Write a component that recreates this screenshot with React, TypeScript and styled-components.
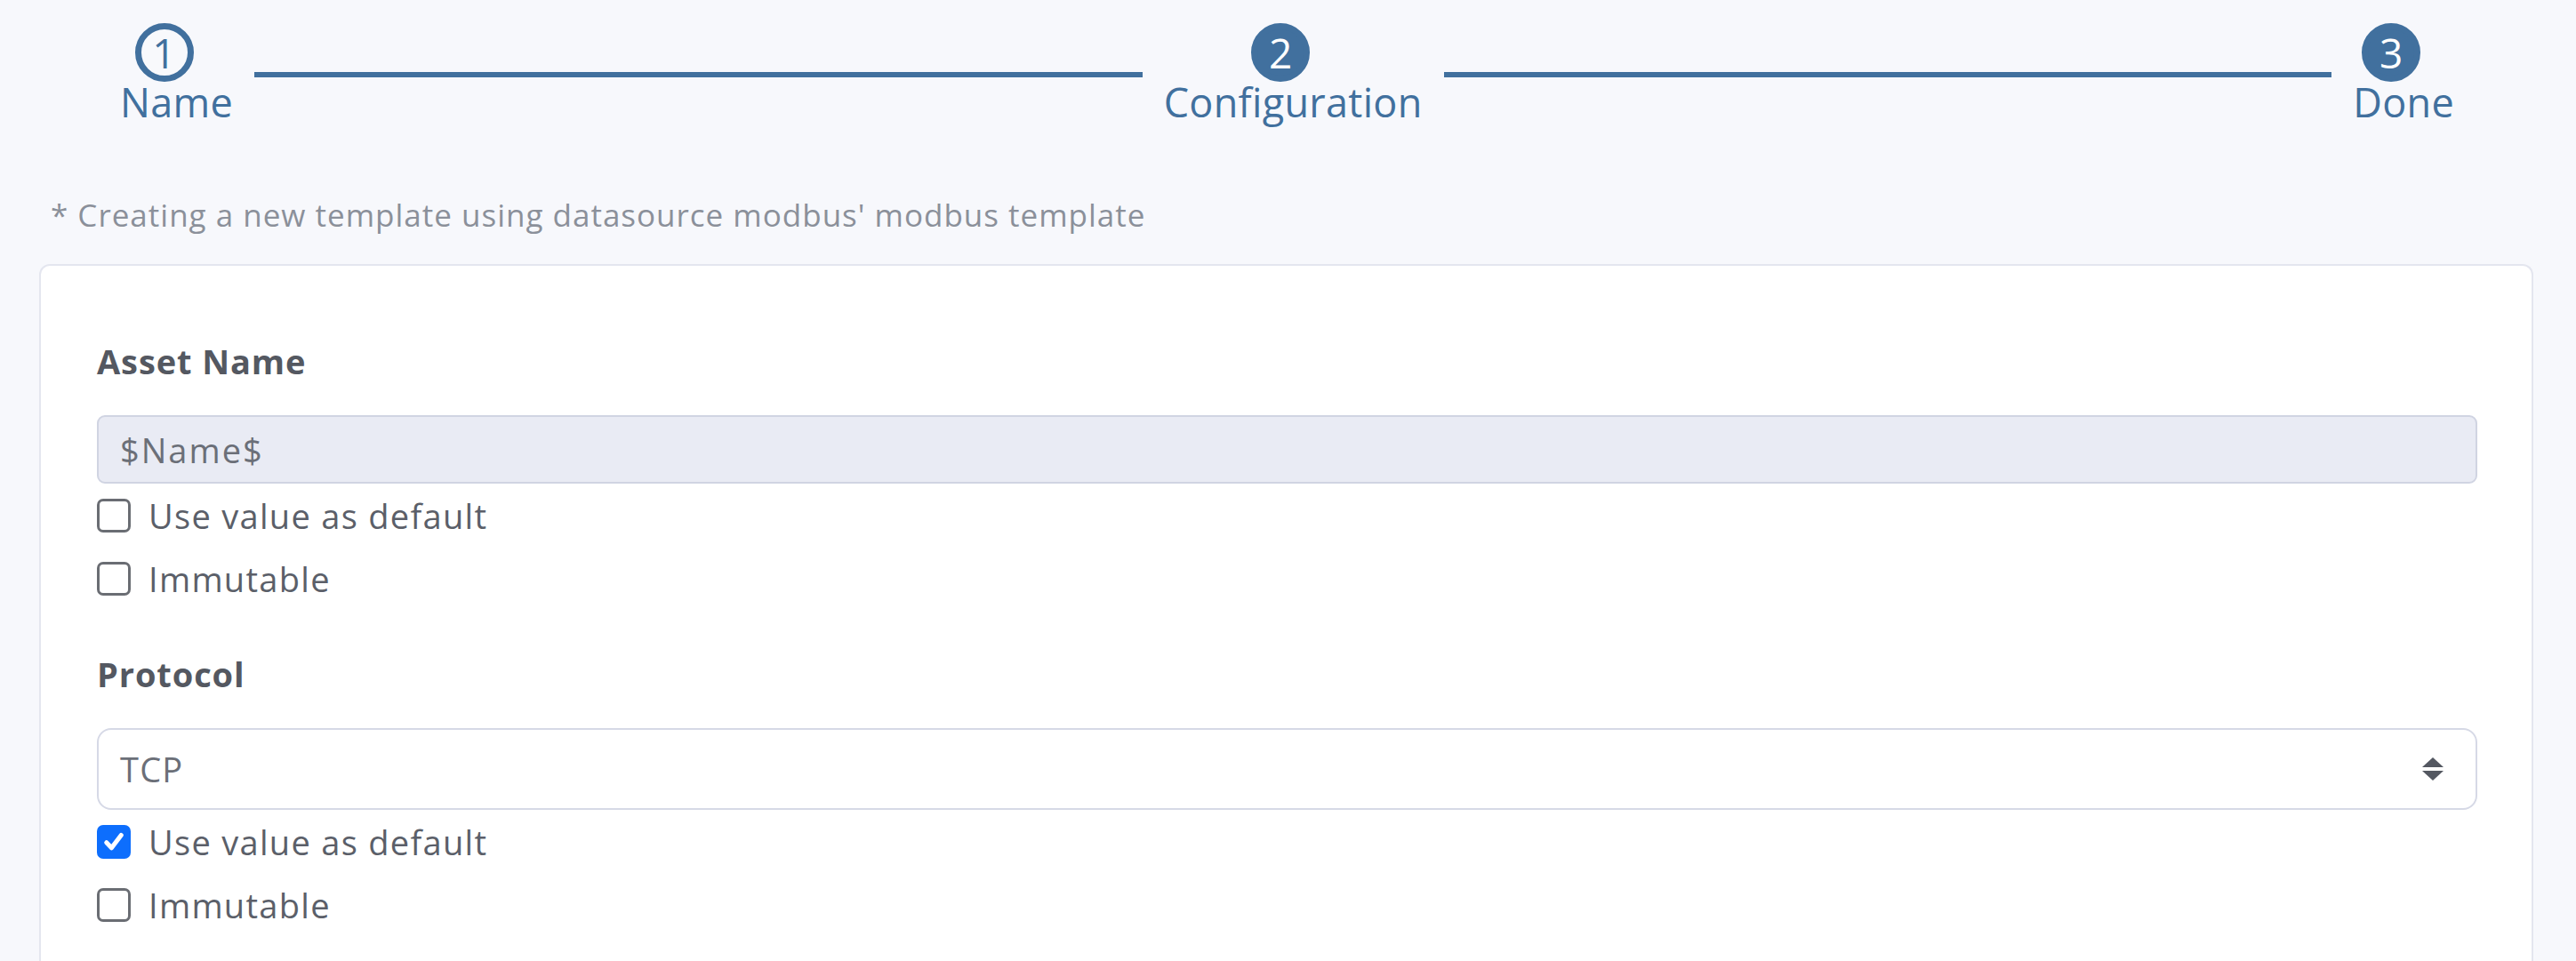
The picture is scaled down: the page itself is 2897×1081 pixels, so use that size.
import React from 'react';
import styled, { createGlobalStyle } from 'styled-components';

const GlobalStyle = createGlobalStyle`
  html, body {
    margin: 0;
    padding: 0;
    background: #f7f8fc;
    font-family: 'Open Sans', 'Noto Sans', sans-serif;
  }
`;

const Page = styled.div`
  padding: 0 48px 0 44px;
  background: #f7f8fc;
  min-height: 1081px;
  box-sizing: border-box;
`;

const Stepper = styled.div`
  display: flex;
  align-items: flex-start;
  padding: 26px 89px 0 91px;
`;

const Step = styled.div`
  display: flex;
  flex-direction: column;
  align-items: center;
`;

const Circle = styled.div<{ $active: boolean }>`
  width: 66px;
  height: 66px;
  box-sizing: border-box;
  border-radius: 50%;
  margin-right: 28px;
  display: flex;
  align-items: center;
  justify-content: center;
  font-size: 46px;
  line-height: 1;
  border: 7px solid #41709e;
  background: ${(p) => (p.$active ? '#f8f9fc' : '#41709e')};
  color: ${(p) => (p.$active ? '#41709e' : '#ffffff')};
`;

const StepLabel = styled.div`
  font-size: 45px;
  line-height: 54px;
  margin-top: -4px;
  color: #41709e;
  white-space: nowrap;
  letter-spacing: 0.3px;
`;

const Line = styled.div`
  flex: 1;
  height: 6px;
  margin: 55px 24px 0;
  background: #41709e;
`;

const Note = styled.div`
  margin-top: 75px;
  padding-left: 13px;
  font-size: 35px;
  line-height: 50px;
  letter-spacing: 1px;
  color: #8b909a;
`;

const Card = styled.div`
  margin-top: 30px;
  background: #ffffff;
  border: 2px solid #e4e6ef;
  border-bottom: none;
  border-radius: 12px 12px 0 0;
  padding: 84px 61px 40px 63px;
`;

const Field = styled.div`
  display: flex;
  flex-direction: column;
  & + & {
    margin-top: 49px;
  }
`;

const Label = styled.div`
  font-size: 38px;
  line-height: 46px;
  font-weight: 700;
  letter-spacing: 0.9px;
  color: #545861;
  margin-bottom: 38px;
`;

const TextInput = styled.input`
  height: 77px;
  box-sizing: border-box;
  border: 2px solid #d0d4e2;
  border-radius: 9px;
  background: #e9ebf4;
  padding: 0 24px;
  font-family: inherit;
  font-size: 38px;
  letter-spacing: 2px;
  color: #6b6f78;
  -webkit-text-fill-color: #6b6f78;
  opacity: 1;
  outline: none;
`;

const SelectBox = styled.div`
  height: 92px;
  box-sizing: border-box;
  border: 2px solid #d6d9e6;
  border-radius: 16px;
  background: #ffffff;
  padding: 0 36px 0 24px;
  display: flex;
  align-items: center;
  justify-content: space-between;
  font-size: 38px;
  letter-spacing: 1.2px;
  color: #6b6f78;
`;

const CheckRow = styled.label`
  height: 71px;
  display: flex;
  align-items: center;
  gap: 20px;
  font-size: 38px;
  letter-spacing: 1.3px;
  color: #5b5f69;
`;

const Box = styled.span<{ $checked: boolean }>`
  width: 38px;
  height: 38px;
  flex-shrink: 0;
  box-sizing: border-box;
  border-radius: 7px;
  display: flex;
  align-items: center;
  justify-content: center;
  border: ${(p) => (p.$checked ? 'none' : '3px solid #6a6d73')};
  background: ${(p) => (p.$checked ? '#0d6efd' : '#ffffff')};
`;

const Check = ({ checked, label }: { checked?: boolean; label: string }) => (
  <CheckRow>
    <Box $checked={!!checked}>
      {checked && (
        <svg width="30" height="30" viewBox="0 0 20 20">
          <path d="M4.5 10.5l3.8 4L15.5 5" fill="none" stroke="#fff" strokeWidth="3.4" strokeLinecap="round" strokeLinejoin="round" />
        </svg>
      )}
    </Box>
    {label}
  </CheckRow>
);

const Arrows = () => (
  <svg width="24" height="26" viewBox="0 0 24 26">
    <path d="M12 0L24 11H0z" fill="#545861" />
    <path d="M0 15h24L12 26z" fill="#545861" />
  </svg>
);

const steps = ['Name', 'Configuration', 'Done'];

const App = () => {
  return (
    <Page>
      <GlobalStyle />
      <Stepper>
        {steps.map((s, i) => (
          <React.Fragment key={s}>
            {i > 0 && <Line />}
            <Step>
              <Circle $active={i === 0}>{i + 1}</Circle>
              <StepLabel>{s}</StepLabel>
            </Step>
          </React.Fragment>
        ))}
      </Stepper>
      <Note>* Creating a new template using datasource modbus' modbus template</Note>
      <Card>
        <Field>
          <Label>Asset Name</Label>
          <TextInput value="$Name$" disabled readOnly />
          <Check label="Use value as default" />
          <Check label="Immutable" />
        </Field>
        <Field>
          <Label>Protocol</Label>
          <SelectBox>
            <span>TCP</span>
            <Arrows />
          </SelectBox>
          <Check checked label="Use value as default" />
          <Check label="Immutable" />
        </Field>
      </Card>
    </Page>
  );
};

export default App;
